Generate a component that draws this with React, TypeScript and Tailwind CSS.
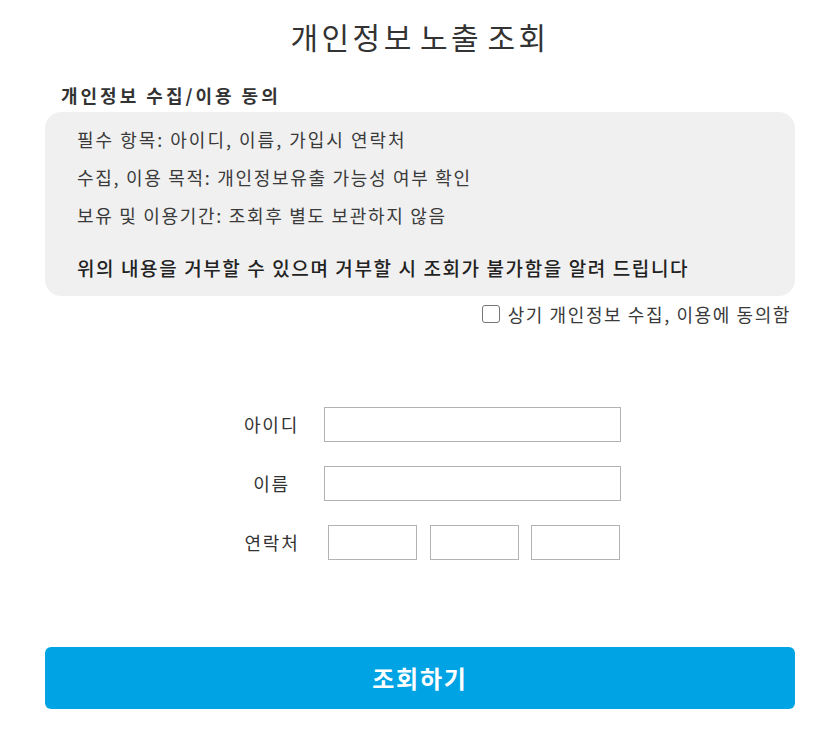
export default function App() {
  return (
    <div className="w-[825px] min-h-[746px] bg-white text-[#333] font-['Noto_Sans_CJK_KR','Noto_Sans',sans-serif]">
      <div className="pl-[45px] pr-[30px] pt-[14px]">
        <h1 className="text-center text-[30px] font-normal leading-[44px] tracking-[3.5px] [word-spacing:-5px]">개인정보 노출 조회</h1>

        <h2 className="mt-[25px] ml-[16px] text-[18px] font-semibold leading-[24px] tracking-[3px]">개인정보 수집/이용 동의</h2>

        <div className="mt-[5px] rounded-[16px] bg-[#f0f0f0] px-[32px] pt-[15px] pb-[16px] text-[18px] tracking-[1.7px] text-[#3a3a3a]">
          <p className="leading-[24px] tracking-[2px]">필수 항목: 아이디, 이름, 가입시 연락처</p>
          <p className="mt-[14px] leading-[24px]">수집, 이용 목적: 개인정보유출 가능성 여부 확인</p>
          <p className="mt-[14px] leading-[24px]">보유 및 이용기간: 조회후 별도 보관하지 않음</p>
          <p className="mt-[29px] text-[19px] font-medium leading-[24px] tracking-[1.6px] text-[#222]">
            위의 내용을 거부할 수 있으며 거부할 시 조회가 불가함을 알려 드립니다
          </p>
        </div>

        <label className="mt-[6px] flex items-center justify-end gap-[8px] pr-[4px] text-[18px] leading-[24px] tracking-[1.6px] text-[#3a3a3a]">
          <span className="h-[18px] w-[18px] shrink-0 rounded-[3px] border border-[#767676] bg-white" />
          상기 개인정보 수집, 이용에 동의함
        </label>

        <div className="mt-[81px] flex flex-col items-center gap-[24px] pl-[2px]">
          <div className="flex items-center">
            <span className="w-[100px] text-center text-[18px] tracking-[1.8px] text-[#333]">아이디</span>
            <input className="ml-[2px] h-[35px] w-[297px] border border-[#b3b3b3]" />
          </div>
          <div className="flex items-center">
            <span className="w-[100px] text-center text-[18px] tracking-[1.8px] text-[#333]">이름</span>
            <input className="ml-[2px] h-[35px] w-[297px] border border-[#b3b3b3]" />
          </div>
          <div className="flex items-center">
            <span className="w-[100px] text-center text-[18px] tracking-[1.8px] text-[#333]">연락처</span>
            <div className="ml-[6px] flex gap-[12.5px]">
              <input className="h-[35px] w-[89px] border border-[#b3b3b3]" />
              <input className="h-[35px] w-[89px] border border-[#b3b3b3]" />
              <input className="h-[35px] w-[89px] border border-[#b3b3b3]" />
            </div>
          </div>
        </div>

        <button className="mt-[87px] h-[62px] w-full rounded-[6px] bg-[#00a4e4] text-[24px] font-bold tracking-[1.8px] text-white">
          조회하기
        </button>
      </div>
    </div>
  );
}
